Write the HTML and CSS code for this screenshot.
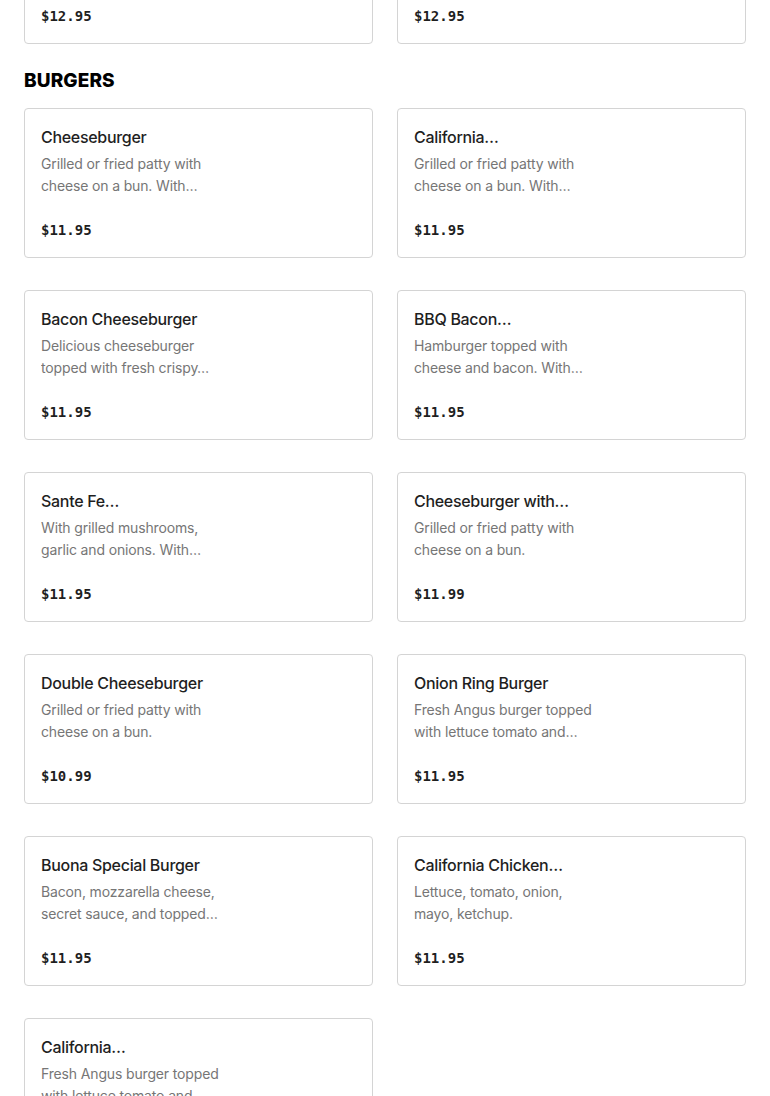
FILE: index.html
```html
<!DOCTYPE html>
<html lang="en">
<head>
<meta charset="utf-8">
<title>Menu</title>
<link rel="stylesheet" href="styles.css">
</head>
<body>
<main class="menu">
  <section class="section section-prev">
    <div class="grid">
      <div class="card">
        <div class="item-price">$12.95</div>
      </div>
      <div class="card">
        <div class="item-price">$12.95</div>
      </div>
    </div>
  </section>

  <section class="section">
    <h2 class="section-title">BURGERS</h2>
    <div class="grid">
      <div class="card">
        <h3 class="item-title">Cheeseburger</h3>
        <p class="item-desc">Grilled or fried patty with cheese on a bun. With…</p>
        <div class="item-price">$11.95</div>
      </div>
      <div class="card">
        <h3 class="item-title">California…</h3>
        <p class="item-desc">Grilled or fried patty with cheese on a bun. With…</p>
        <div class="item-price">$11.95</div>
      </div>
      <div class="card">
        <h3 class="item-title">Bacon Cheeseburger</h3>
        <p class="item-desc">Delicious cheeseburger topped with fresh crispy…</p>
        <div class="item-price">$11.95</div>
      </div>
      <div class="card">
        <h3 class="item-title">BBQ Bacon…</h3>
        <p class="item-desc">Hamburger topped with cheese and bacon. With…</p>
        <div class="item-price">$11.95</div>
      </div>
      <div class="card">
        <h3 class="item-title">Sante Fe…</h3>
        <p class="item-desc">With grilled mushrooms, garlic and onions. With…</p>
        <div class="item-price">$11.95</div>
      </div>
      <div class="card">
        <h3 class="item-title">Cheeseburger with…</h3>
        <p class="item-desc">Grilled or fried patty with cheese on a bun.</p>
        <div class="item-price">$11.99</div>
      </div>
      <div class="card">
        <h3 class="item-title">Double Cheeseburger</h3>
        <p class="item-desc">Grilled or fried patty with cheese on a bun.</p>
        <div class="item-price">$10.99</div>
      </div>
      <div class="card">
        <h3 class="item-title">Onion Ring Burger</h3>
        <p class="item-desc">Fresh Angus burger topped with lettuce tomato and…</p>
        <div class="item-price">$11.95</div>
      </div>
      <div class="card">
        <h3 class="item-title">Buona Special Burger</h3>
        <p class="item-desc">Bacon, mozzarella cheese, secret sauce, and topped…</p>
        <div class="item-price">$11.95</div>
      </div>
      <div class="card">
        <h3 class="item-title">California Chicken…</h3>
        <p class="item-desc">Lettuce, tomato, onion, mayo, ketchup.</p>
        <div class="item-price">$11.95</div>
      </div>
      <div class="card">
        <h3 class="item-title">California…</h3>
        <p class="item-desc">Fresh Angus burger topped with lettuce tomato and…</p>
        <div class="item-price">$11.95</div>
      </div>
    </div>
  </section>
</main>
</body>
</html>
```

FILE: styles.css
```css
* {
  box-sizing: border-box;
}

html, body {
  margin: 0;
  padding: 0;
  background: #ffffff;
}

body {
  font-family: Inter, "Noto Sans", Roboto, sans-serif;
  color: #191919;
  overflow: hidden;
}

.menu {
  padding: 0 24px;
  margin-top: -106px;
}

.section-title {
  margin: 25px 0 15px;
  font-size: 19px;
  line-height: 24px;
  font-weight: 800;
  letter-spacing: 0.1px;
  color: #000000;
}

.grid {
  display: grid;
  grid-template-columns: 1fr 1fr;
  column-gap: 24px;
  row-gap: 32px;
}

.card {
  border: 1px solid #d4d4d4;
  border-radius: 4px;
  padding: 16px 16px 17px;
  height: 150px;
  display: flex;
  flex-direction: column;
}

.item-title {
  margin: 0;
  font-size: 16px;
  line-height: 24px;
  font-weight: 500;
  letter-spacing: -0.3px;
  color: #1f1f1f;
  white-space: nowrap;
}

.item-desc {
  margin: 4px 0 0;
  width: 188px;
  font-size: 14px;
  line-height: 22px;
  letter-spacing: -0.15px;
  color: #767676;
  height: 44px;
  overflow: hidden;
}

.item-price {
  margin-top: auto;
  font-family: "DejaVu Sans Mono", "Liberation Mono", monospace;
  font-size: 14px;
  line-height: 20px;
  font-weight: 700;
  color: #1f1f1f;
}
```
